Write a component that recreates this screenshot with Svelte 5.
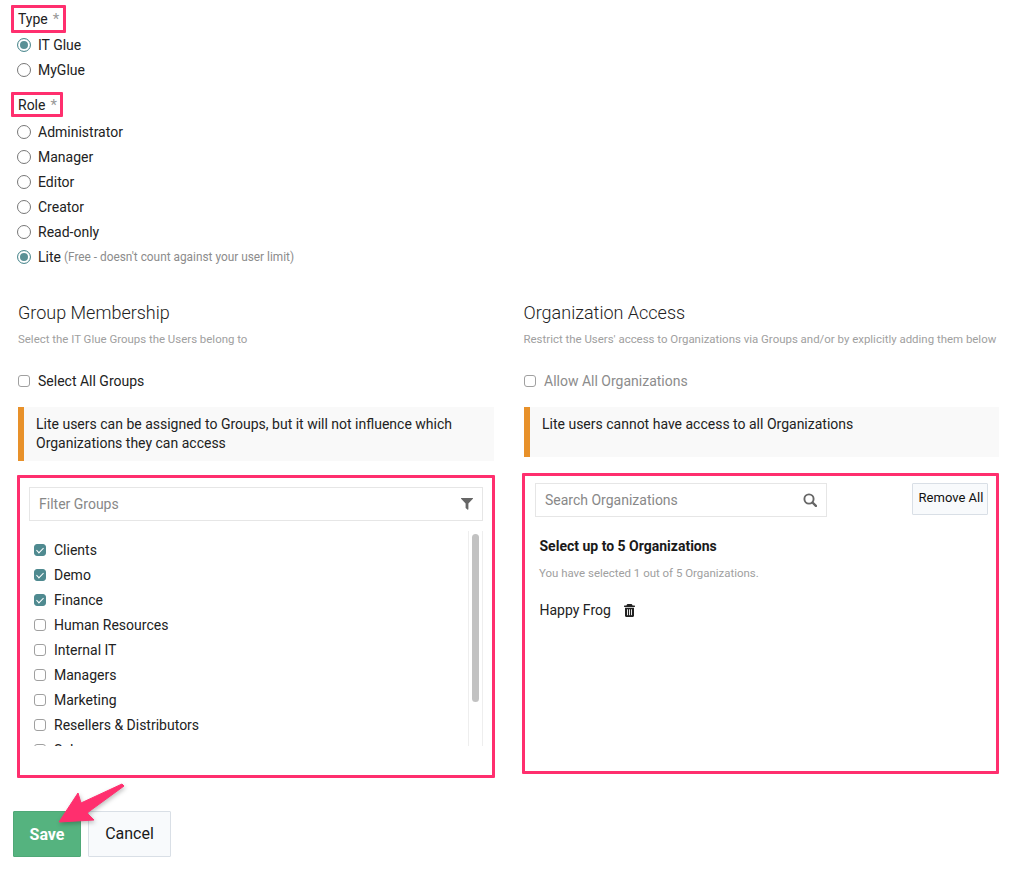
<script>
  const types = [
    { label: 'IT Glue', checked: true },
    { label: 'MyGlue', checked: false }
  ]
  const roles = [
    { label: 'Administrator' },
    { label: 'Manager' },
    { label: 'Editor' },
    { label: 'Creator' },
    { label: 'Read-only' },
    { label: 'Lite', note: "(Free - doesn't count against your user limit)", checked: true }
  ]
  const groups = [
    { label: 'Clients', checked: true },
    { label: 'Demo', checked: true },
    { label: 'Finance', checked: true },
    { label: 'Human Resources' },
    { label: 'Internal IT' },
    { label: 'Managers' },
    { label: 'Marketing' },
    { label: 'Resellers & Distributors' },
    { label: 'Sales' }
  ]
</script>

<div class="page">
  <div class="field-label field-label--type">Type <span class="req">*</span></div>
  <div class="types">
    {#each types as t}
      <label class="radio"><input type="radio" name="type" checked={t.checked} />{t.label}</label>
    {/each}
  </div>

  <div class="field-label field-label--role">Role <span class="req">*</span></div>
  <div class="roles">
    {#each roles as r}
      <label class="radio">
        <input type="radio" name="role" checked={r.checked} />{r.label}
        {#if r.note}<span class="note">{r.note}</span>{/if}
      </label>
    {/each}
  </div>

  <div class="columns">
    <section class="col">
      <h3>Group Membership</h3>
      <p class="hint">Select the IT Glue Groups the Users belong to</p>
      <label class="check check--all"><input type="checkbox" />Select All Groups</label>
      <div class="callout callout--groups">Lite users can be assigned to Groups, but it will not influence which Organizations they can access</div>

      <div class="marked marked--groups">
        <div class="input input--filter">
          <span>Filter Groups</span>
          <svg width="12" height="12" viewBox="0 0 12 12"><path d="M.4 0h11.2c.4 0 .5.4.3.7L7.4 5.4V11c0 .6-.5.9-1 .5L4.9 10.2a.7.7 0 0 1-.3-.5V5.4L.1.7C-.1.4 0 0 .4 0z" fill="#666"/></svg>
        </div>
        <div class="list-wrap">
          <div class="list">
            {#each groups as g}
              <label class="check check--row"><input type="checkbox" checked={g.checked} />{g.label}</label>
            {/each}
          </div>
          <div class="track"><div class="thumb"></div></div>
        </div>
      </div>
    </section>

    <section class="col col--right">
      <h3>Organization Access</h3>
      <p class="hint">Restrict the Users' access to Organizations via Groups and/or by explicitly adding them below</p>
      <label class="check check--all check--off"><input type="checkbox" />Allow All Organizations</label>
      <div class="callout callout--orgs">Lite users cannot have access to all Organizations</div>

      <div class="marked marked--orgs">
        <div class="org-top">
          <div class="input input--search">
            <span>Search Organizations</span>
            <svg width="14" height="14" viewBox="0 0 14 14" fill="none" stroke="#666"><circle cx="6" cy="6" r="4.6" stroke-width="1.9"/><path d="M9.5 9.5l3.4 3.4" stroke-width="2.4" stroke-linecap="round"/></svg>
          </div>
          <button class="btn-remove">Remove All</button>
        </div>
        <div class="org-body">
          <h4>Select up to 5 Organizations</h4>
          <p class="hint hint--count">You have selected 1 out of 5 Organizations.</p>
          <div class="org-item">
            Happy Frog
            <svg width="11" height="13" viewBox="0 0 11 13"><path d="M3.6 0h3.8c.3 0 .6.2.7.5l.5 1h2a.4.4 0 0 1 .4.4v.6a.4.4 0 0 1-.4.4H.4a.4.4 0 0 1-.4-.4v-.6a.4.4 0 0 1 .4-.4h2l.5-1c.1-.3.4-.5.7-.5zM1 3.7h9v8.1c0 .7-.5 1.2-1.1 1.2H2.100C1.500 13 1 12.500 1 11.800z" fill="#222"/><path d="M3.500 5.300v5.900M5.500 5.300v5.900M7.500 5.300v5.900" stroke="#fff" stroke-width=".9"/></svg>
          </div>
        </div>
      </div>
    </section>
  </div>

  <div class="actions">
    <button class="btn btn--save">Save</button>
    <button class="btn btn--cancel">Cancel</button>
  </div>

  <svg class="arrow" width="140" height="60" viewBox="0 0 140 60">
    <polygon points="49,42 68,13 71,23 112,4 114,6 77,33 84,40" fill="#ff2f6e" stroke="#ff2f6e" stroke-width="1" stroke-linejoin="round"/>
  </svg>
</div>

<style>
  :global(body) {
    margin: 0;
    background: #fff;
  }

  .page {
    position: relative;
    box-sizing: border-box;
    width: 1014px;
    height: 873px;
    padding: 5px 0 0 18px;
    font-family: Roboto, "Liberation Sans", sans-serif;
    font-size: 14px;
    color: #1a1a1a;
    overflow: hidden;
  }

  .field-label {
    box-sizing: border-box;
    display: flex;
    align-items: center;
    gap: 5px;
    width: max-content;
    margin-left: -7px;
    padding: 0 3px 0 4px;
    border: 3px solid #ff2f6e;
    border-radius: 1px;
    color: #222;
  }

  .field-label--type {
    height: 28px;
    padding-right: 4px;
  }

  .field-label--role {
    height: 25px;
    margin-top: 10px;
  }

  .req {
    color: #999;
    font-size: 15px;
  }

  .types {
    margin-top: -1px;
  }

  .roles {
    margin-top: 2px;
  }

  .radio {
    display: flex;
    align-items: center;
    height: 25px;
    color: #222;
  }

  .radio input {
    appearance: none;
    box-sizing: border-box;
    width: 14px;
    height: 14px;
    margin: 0 7px 0 -1px;
    border: 1px solid #777;
    border-radius: 50%;
    background: #fff;
  }

  .radio input:checked {
    border-color: #4f8a90;
    box-shadow: inset 0 0 0 2px #fff, inset 0 0 0 7px #5a9095;
  }

  .note {
    margin: 1px 0 0 3px;
    font-size: 11.85px;
    color: #8c8c8c;
  }

  .columns {
    display: grid;
    grid-template-columns: 476px 475px;
    column-gap: 30px;
    margin-top: 32px;
  }

  h3 {
    margin: 0;
    font-size: 18px;
    font-weight: 300;
    line-height: 24px;
    color: #222;
  }

  .col--right h3,
  .col--right .hint {
    margin-left: -0.5px;
  }

  .hint {
    margin: 6px 0 0;
    font-size: 11.45px;
    line-height: 17px;
    color: #a0a0a0;
    white-space: nowrap;
  }

  .check {
    display: flex;
    align-items: center;
    color: #222;
  }

  .check--all {
    height: 20px;
    margin-top: 23px;
  }

  .check--off {
    color: #8c8c8c;
  }

  .check input {
    appearance: none;
    position: relative;
    box-sizing: border-box;
    flex: none;
    width: 12px;
    height: 12px;
    margin: 0 8px 0 0;
    border: 1px solid #a0a0a0;
    border-radius: 3px;
    background: #fff;
  }

  .check input:checked {
    border-color: #4f8a90;
    background: #4f8a90;
  }

  .check input:checked::after {
    content: "";
    position: absolute;
    left: 3px;
    top: 1px;
    width: 3px;
    height: 6px;
    border: solid #fff;
    border-width: 0 1.5px 1.5px 0;
    transform: rotate(45deg);
  }

  .callout {
    box-sizing: border-box;
    margin-top: 16px;
    padding: 8px 12px 0;
    border-left: 6px solid #e8912a;
    background: #f9f9f9;
    line-height: 19px;
    color: #222;
  }

  .callout--groups {
    height: 54px;
  }

  .callout--orgs {
    height: 50px;
  }

  .marked {
    box-sizing: border-box;
    border: 3px solid #ff2f6e;
    border-radius: 1px;
    background: #fff;
  }

  .marked--groups {
    height: 303px;
    margin: 14px -1px 0 -1px;
    padding: 9px 9px 0;
  }

  .marked--orgs {
    height: 301px;
    margin: 16px 0 0 -2px;
    padding: 7px 8px 0 10px;
  }

  .input {
    box-sizing: border-box;
    display: flex;
    align-items: center;
    justify-content: space-between;
    border: 1px solid #e6e6e6;
    background: #fff;
    color: #888;
  }

  .input--filter {
    height: 34px;
    padding: 0 9px;
  }

  .input--search {
    width: 292px;
    height: 34px;
    padding: 0 9px;
  }

  .list-wrap {
    display: flex;
    justify-content: space-between;
    height: 215px;
    margin-top: 10px;
  }

  .list {
    padding: 6px 0 0 5px;
    overflow: hidden;
  }

  .check--row {
    height: 25px;
  }

  .track {
    box-sizing: border-box;
    flex: none;
    width: 15px;
    height: 215px;
    padding: 3px;
    border: solid #eee;
    border-width: 0 1px;
  }

  .thumb {
    width: 7px;
    height: 168px;
    border-radius: 4px;
    background: #c2c2c2;
  }

  .org-top {
    display: flex;
    justify-content: space-between;
    align-items: flex-start;
  }

  .btn-remove {
    box-sizing: border-box;
    width: 76px;
    height: 32px;
    padding: 0 0 3px 2px;
    border: 1px solid #d9dfe6;
    border-radius: 1px;
    background: #f8fafc;
    font-family: inherit;
    font-size: 13px;
    color: #111;
  }

  .org-body {
    padding-left: 4.5px;
  }

  h4 {
    margin: 19px 0 0;
    font-size: 14px;
    font-weight: 700;
    line-height: 20px;
    color: #1a1a1a;
  }

  .hint--count {
    margin-top: 9px;
    line-height: 16px;
  }

  .org-item {
    display: flex;
    align-items: center;
    gap: 13px;
    height: 20px;
    margin-top: 19px;
    color: #222;
  }

  .actions {
    display: flex;
    gap: 7px;
    margin: 33px 0 0 -5px;
  }

  .btn {
    box-sizing: border-box;
    height: 46px;
    border-radius: 1px;
    font-family: inherit;
    font-size: 16px;
  }

  .btn--save {
    width: 68px;
    border: 1px solid #4fa877;
    background: #55b37f;
    color: #fff;
    font-weight: 700;
  }

  .btn--cancel {
    width: 83px;
    padding-bottom: 2px;
    border: 1px solid #d9dfe6;
    background: #f8fafc;
    color: #1a1a1a;
  }

  .arrow {
    position: absolute;
    left: 10px;
    top: 780px;
    filter: drop-shadow(1px 2px 2px rgba(0, 0, 0, 0.25));
  }
</style>
